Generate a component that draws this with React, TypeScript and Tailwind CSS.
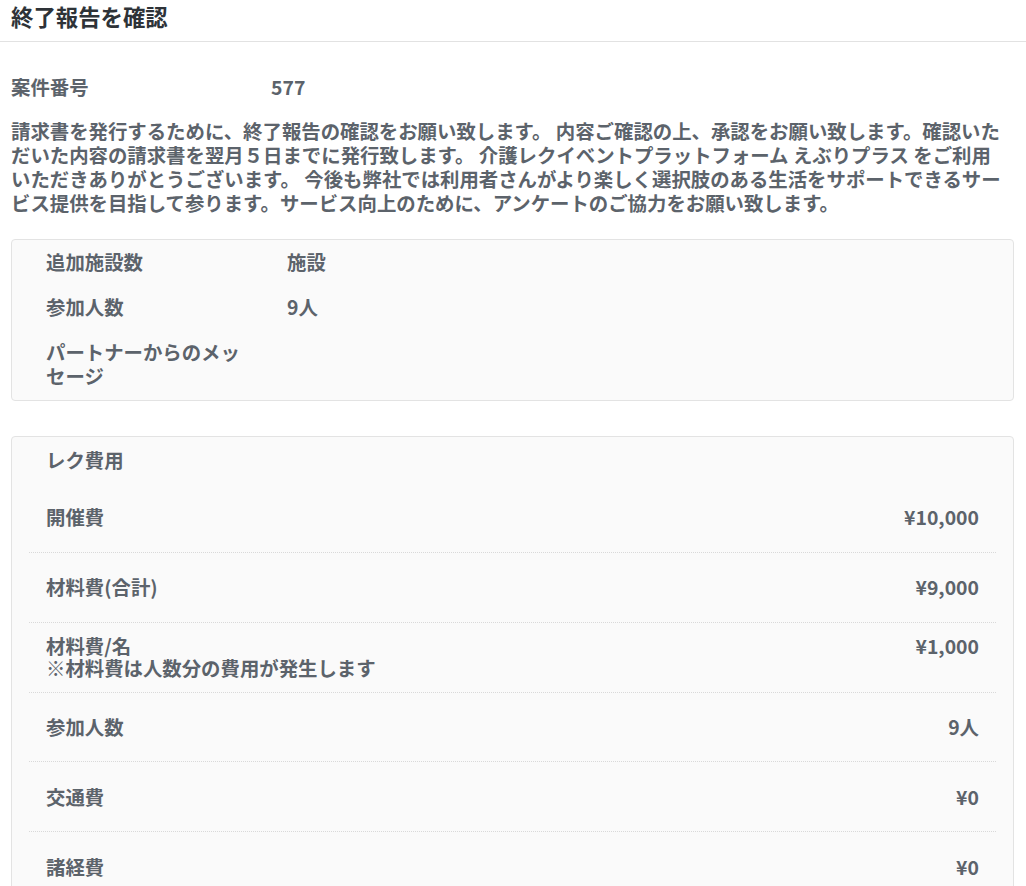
import React from "react";

const font = { fontFamily: '"Noto Sans CJK JP", "Noto Sans", sans-serif' };

function InfoRow({ label, value }: { label: string; value: string }) {
  return (
    <div className="flex">
      <div className="w-[200px] shrink-0">{label}</div>
      <div className="ml-[41px]">{value}</div>
    </div>
  );
}

function FeeRow({
  label,
  note,
  value,
  last,
}: {
  label: string;
  note?: string;
  value: string;
  last?: boolean;
}) {
  return (
    <div
      className={
        "flex justify-between items-start px-[17px] " +
        (note ? "py-[12.5px] leading-[22px] " : "py-[22.4px] ") +
        (last ? "" : "border-b border-dotted border-[#d9d9d9]")
      }
    >
      <div>
        <div>{label}</div>
        {note && <div>{note}</div>}
      </div>
      <div className="text-right">{value}</div>
    </div>
  );
}

export default function App() {
  return (
    <div
      className="min-h-screen bg-white text-[#5c636b] font-bold text-[19.4px] leading-[24px]"
      style={font}
    >
      <div className="h-[42px] border-b border-[#e2e2e2] pl-[11px]">
        <h1 className="text-[22.4px] leading-[32px] text-[#2e3338] font-bold">
          終了報告を確認
        </h1>
      </div>

      <div className="pl-[11px] pr-[12px]">
        <div className="flex mt-[33px] leading-[24px]">
          <div className="w-[260px] shrink-0">案件番号</div>
          <div>577</div>
        </div>

        <p className="mt-[20px] leading-[24px]">
          請求書を発行するために、終了報告の確認をお願い致します。 内容ご確認の上、承認をお願い致します。確認いた
          <br />
          だいた内容の請求書を翌月５日までに発行致します。 介護レクイベントプラットフォーム えぶりプラス をご利用
          <br />
          いただきありがとうございます。 今後も弊社では利用者さんがより楽しく選択肢のある生活をサポートできるサー
          <br />
          ビス提供を目指して参ります。サービス向上のために、アンケートのご協力をお願い致します。
        </p>

        <div className="mt-[24px] border border-[#e3e3e3] rounded-[4px] bg-[#fafafa] pl-[34px] pr-[34px] pt-[10px] pb-[12px] flex flex-col gap-[21px]">
          <InfoRow label="追加施設数" value="施設" />
          <InfoRow label="参加人数" value="9人" />
          <InfoRow label="パートナーからのメッセージ" value="" />
        </div>

        <div className="mt-[35px] border border-[#e3e3e3] rounded-[4px] bg-[#fafafa] pt-[11px] pb-[8px]">
          <div className="pl-[34px]">レク費用</div>
          <div className="mx-[17px] mt-[11px]">
            <FeeRow label="開催費" value="¥10,000" />
            <FeeRow label="材料費(合計)" value="¥9,000" />
            <FeeRow
              label="材料費/名"
              note="※材料費は人数分の費用が発生します"
              value="¥1,000"
            />
            <FeeRow label="参加人数" value="9人" />
            <FeeRow label="交通費" value="¥0" />
            <FeeRow label="諸経費" value="¥0" />
            <FeeRow label="合計" value="¥10,000" last />
          </div>
        </div>
        <div className="h-[40px]" />
      </div>
    </div>
  );
}
